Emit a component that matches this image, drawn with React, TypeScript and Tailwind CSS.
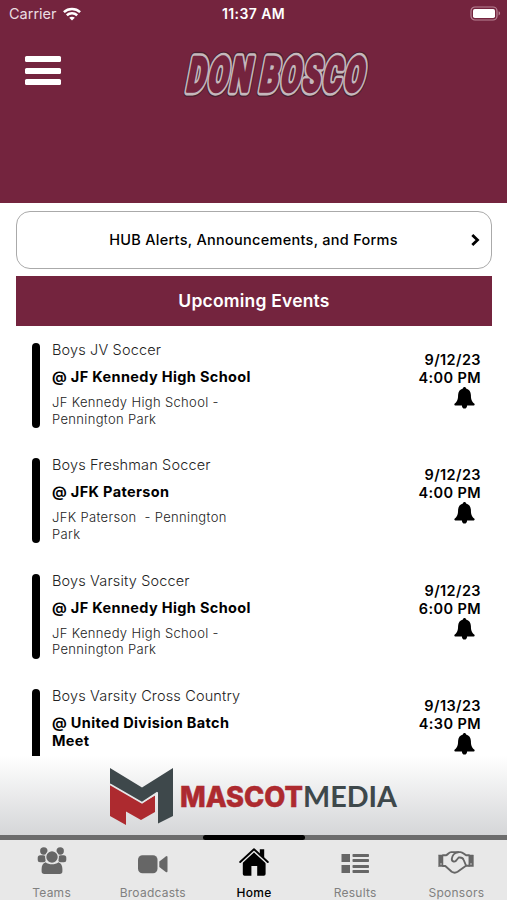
import React from "react";

type Event = {
  team: string;
  opponent: string[];
  venue: string[];
  date: string;
  time: string;
};

const events: Event[] = [
  {
    team: "Boys JV Soccer",
    opponent: ["@ JF Kennedy High School"],
    venue: ["JF Kennedy High School -", "Pennington Park"],
    date: "9/12/23",
    time: "4:00 PM",
  },
  {
    team: "Boys Freshman Soccer",
    opponent: ["@ JFK Paterson"],
    venue: ["JFK Paterson  - Pennington", "Park"],
    date: "9/12/23",
    time: "4:00 PM",
  },
  {
    team: "Boys Varsity Soccer",
    opponent: ["@ JF Kennedy High School"],
    venue: ["JF Kennedy High School -", "Pennington Park"],
    date: "9/12/23",
    time: "6:00 PM",
  },
  {
    team: "Boys Varsity Cross Country",
    opponent: ["@ United Division Batch", "Meet"],
    venue: [],
    date: "9/13/23",
    time: "4:30 PM",
  },
];

function WifiIcon() {
  return (
    <svg className="ml-[6px] h-[14px] w-[18px]" viewBox="0 0 18 14" fill="none" stroke="#fff" strokeWidth="2.5">
      <path d="M0.9 5.1C5.4 0.9 12.6 0.9 17.1 5.1" />
      <path d="M3.8 8.2C6.8 5.5 11.2 5.5 14.2 8.2" />
      <path d="M9 13.6L6.2 10.7C7.8 9.3 10.2 9.3 11.8 10.7Z" fill="#fff" stroke="none" />
    </svg>
  );
}

function BatteryIcon() {
  return (
    <svg className="h-[15px] w-[32px]" viewBox="0 0 32 15">
      <rect x="1" y="1" width="26" height="13" rx="4" fill="none" stroke="#b98496" strokeWidth="1.2" />
      <rect x="3" y="3" width="22" height="9" rx="1.8" fill="#fff" />
      <path d="M28.6 5.3C30.6 6 30.6 8.6 28.6 9.4Z" fill="#b98496" />
    </svg>
  );
}

const logoLayers = [
  { color: "#47202f", width: 11.5 },
  { color: "#c5b8bc", width: 8.8 },
  { color: "#74243e", width: 3.6 },
];

function TeamLogo() {
  const text = {
    y: 0,
    lengthAdjust: "spacingAndGlyphs" as const,
    fontFamily: "Roboto, sans-serif",
    fontWeight: 800,
    fontSize: 47,
    letterSpacing: 4.5,
    strokeLinejoin: "round" as const,
  };
  return (
    <svg className="h-[70px] w-[230px] overflow-visible" viewBox="0 0 230 70">
      <g transform="translate(9.5 45.5) skewX(-11)">
        {logoLayers.map((layer) => (
          <g key={layer.color} fill={layer.color} stroke={layer.color} strokeWidth={layer.width}>
            <text {...text} x={0} textLength={66}>DON</text>
            <text {...text} x={73} textLength={106}>BOSCO</text>
          </g>
        ))}
      </g>
    </svg>
  );
}

function BellIcon() {
  return (
    <svg className="mr-[6px] h-[22px] w-[21px]" viewBox="0 0 21 22" fill="#000">
      <path d="M10.5 0C11.4 0 12 .6 12.1 1.5C15.2 2.3 16.8 4.8 16.9 8C17 12 17.4 14 20.2 16.6C21 17.4 20.7 18.4 19.8 18.4H13.1C13.1 20.3 12 21.6 10.5 21.6S7.9 20.3 7.9 18.4H1.2C.3 18.4 0 17.4.8 16.6C3.6 14 4 12 4.1 8C4.2 4.8 5.8 2.3 8.9 1.5C9 .6 9.6 0 10.5 0Z" />
    </svg>
  );
}

function EventRow({ event }: { event: Event }) {
  return (
    <div className="flex h-[115.3px] shrink-0 pl-8 pr-[26px]">
      <div className="h-[85px] w-2 shrink-0 rounded-full bg-black" />
      <div className="ml-3 flex-1 whitespace-pre">
        <div className="h-[15px] text-[14.5px] font-light leading-[14px] tracking-[0.15px] text-[#222]">{event.team}</div>
        <div className="mt-[10px] text-[14.5px] font-bold leading-[18px] tracking-[0.35px]">
          {event.opponent.map((line) => (
            <div key={line}>{line}</div>
          ))}
        </div>
        <div className="mt-[8px] text-[13px] font-light leading-[16.5px] tracking-[0.34px] text-[#222]">
          {event.venue.map((line) => (
            <div key={line}>{line}</div>
          ))}
        </div>
      </div>
      <div className="flex flex-col items-end pt-[8px] text-[14.5px] font-semibold leading-[18px] tracking-[0.4px]">
        <div>{event.date}</div>
        <div>{event.time}</div>
        <BellIcon />
      </div>
    </div>
  );
}

function MascotMediaLogo() {
  return (
    <svg className="h-[84px] w-full" viewBox="0 0 507 84">
      <path d="M110 12L142 31.5L173 12V60L158 67.5V36L142 46.5L110 29Z" fill="#3e484b" />
      <path d="M110 28.5L142 47L155 39.5V56L141 64L126 55.5V69L110 60Z" fill="#ad2a2f" />
      <path d="M110 28.2L142 46.7L157.5 36.5" fill="none" stroke="#e7e8e9" strokeWidth="1.7" />
      <text x="180" y="50.5" textLength="123" lengthAdjust="spacingAndGlyphs" fontFamily="Inter, sans-serif" fontWeight="800" fontSize="28" fill="#ad2a2f" stroke="#ad2a2f" strokeWidth=".5">MASCOT</text>
      <text x="303" y="50.5" textLength="94" lengthAdjust="spacingAndGlyphs" fontFamily="Lato, sans-serif" fontWeight="700" fontSize="28" fill="#3e484b">MEDIA</text>
    </svg>
  );
}

function TeamsIcon() {
  return (
    <svg className="h-[28px] w-[30px]" viewBox="0 0 30 28" fill="#666">
      <circle cx="6.8" cy="4" r="3.7" />
      <circle cx="23.2" cy="4" r="3.7" />
      <rect x="0.7" y="8.2" width="8" height="7" rx="2.5" />
      <rect x="21.3" y="8.2" width="8" height="7" rx="2.5" />
      <circle cx="15" cy="10" r="6.3" stroke="#e8e8e8" strokeWidth="1.2" />
      <path d="M8.6 15.2C12 17.9 18 17.9 21.4 15.2C24.2 16.2 25.4 18.6 25.4 22V24.3Q25.4 27 22.7 27H7.3Q4.6 27 4.6 24.3V22C4.6 18.6 5.8 16.2 8.6 15.2Z" />
    </svg>
  );
}

function VideoIcon() {
  return (
    <svg className="h-[28px] w-[30px]" viewBox="0 0 30 28" fill="#666">
      <rect x="0" y="8.2" width="19.5" height="18" rx="4.5" />
      <path d="M21.3 14.4L27.8 9.4Q29.5 8.5 29.5 10.5V23.9Q29.5 25.9 27.8 25L21.3 20Z" />
    </svg>
  );
}

function HomeIcon() {
  return (
    <svg className="h-[30px] w-[30px] -mb-[2px]" viewBox="0 0 30 30" fill="#000">
      <path d="M15 4.5L26.6 15.5V27Q26.6 28.8 24.8 28.8H18.2V19H12.4V28.8H5.6Q3.8 28.8 3.8 27V15.5Z" />
      <path d="M1.2 15.6L15 3L28.8 15.6" fill="none" stroke="#e8e8e8" strokeWidth="3.6" />
      <path d="M20.8 2.2H25.2V11.2L20.8 7.2Z" />
      <path d="M1.2 15L15 2.3L28.8 15" fill="none" stroke="#000" strokeWidth="1.9" strokeLinecap="round" strokeLinejoin="round" />
    </svg>
  );
}

function ResultsIcon() {
  return (
    <svg className="h-[28px] w-[30px]" viewBox="0 0 30 28" fill="#666">
      <rect x="1.5" y="7" width="8.5" height="8" />
      <rect x="1.5" y="18" width="8.5" height="8" />
      <rect x="12.5" y="7" width="16.5" height="3" rx=".8" />
      <rect x="12.5" y="12" width="16.5" height="3" rx=".8" />
      <rect x="12.5" y="18" width="16.5" height="3" rx=".8" />
      <rect x="12.5" y="23" width="16.5" height="3" rx=".8" />
    </svg>
  );
}

function SponsorsIcon() {
  return (
    <svg className="h-[28px] w-[36px]" viewBox="0 0 36 28" fill="none" stroke="#666" strokeWidth="1.9" strokeLinejoin="round" strokeLinecap="round">
      <path d="M.6 8H5V19.5H.6ZM31 8H35.4V19.5H31Z" fill="#666" strokeWidth="0.5" />
      <path d="M5 8.3H8C10 7.7 10.8 5.1 13.2 5.1H22.5C25 5.1 26.2 7.7 28.2 8.3H31" />
      <path d="M5 19H7.3L13.7 24.8Q16.7 26.7 19.6 24.8L28 18.8H31" />
      <path d="M20.2 5.2C16.2 5.4 14.2 9 13.8 11.8C13.6 15 17.3 15.5 18.6 13L20.7 10.5C23.8 10.1 25.1 11.2 25.7 13L28 18.5" />
      <circle cx="3" cy="17" r=".7" fill="#e8e8e8" stroke="none" />
      <circle cx="33" cy="17" r=".7" fill="#e8e8e8" stroke="none" />
    </svg>
  );
}

const tabs = [
  { label: "Teams", icon: <TeamsIcon />, active: false },
  { label: "Broadcasts", icon: <VideoIcon />, active: false },
  { label: "Home", icon: <HomeIcon />, active: true },
  { label: "Results", icon: <ResultsIcon />, active: false },
  { label: "Sponsors", icon: <SponsorsIcon />, active: false },
];

export default function App() {
  return (
    <div className="flex h-[900px] w-[507px] flex-col overflow-hidden bg-white font-['Inter',sans-serif] text-black">
      <header className="h-[203px] shrink-0 bg-[#74243e] text-white">
        <div className="grid h-[27px] grid-cols-3 items-center text-[14.5px]">
          <div className="flex items-center pl-[9px]">
            <span className="text-[#eadde1]">Carrier</span>
            <WifiIcon />
          </div>
          <div className="text-center text-[14px] font-semibold tracking-[0.4px]">11:37 AM</div>
          <div className="flex justify-end pr-[5px]">
            <BatteryIcon />
          </div>
        </div>
        <div className="flex pt-[18px]">
          <div className="ml-[25px] mt-[11px] flex w-[35.5px] flex-col gap-[5.5px]">
            <div className="h-[6px] rounded-[1.5px] bg-white" />
            <div className="h-[6px] rounded-[1.5px] bg-white" />
            <div className="h-[6px] rounded-[1.5px] bg-white" />
          </div>
          <div className="ml-[115px]">
            <TeamLogo />
          </div>
        </div>
      </header>

      <div className="ml-4 mr-[15px] mt-2 flex h-[58px] shrink-0 items-center rounded-[14px] border-[1.5px] border-[#aaa] pl-[19px] pr-[11px]">
        <span className="flex-1 text-center text-[14.5px] font-medium tracking-[0.28px]">HUB Alerts, Announcements, and Forms</span>
        <svg className="h-[12px] w-[9px]" viewBox="0 0 9 12" fill="none" stroke="#000" strokeWidth="2.8">
          <path d="M1.3 1L6.5 6L1.3 11" />
        </svg>
      </div>

      <div className="ml-4 mr-[15px] mt-[7px] flex h-[50px] shrink-0 items-center justify-center bg-[#74243e] text-[17.5px] font-semibold tracking-[0.2px] text-white">
        Upcoming Events
      </div>

      <main className="flex h-[430px] shrink-0 flex-col overflow-hidden pt-[17px]">
        {events.map((event) => (
          <EventRow key={event.team} event={event} />
        ))}
      </main>

      <div className="h-[79px] shrink-0 overflow-hidden bg-gradient-to-b from-white to-[#d5d6d8]">
        <MascotMediaLogo />
      </div>

      <div className="flex h-[5px] shrink-0 justify-center bg-[#6c6c6c]">
        <div className="w-[102px] rounded-full bg-black" />
      </div>

      <nav className="grid flex-1 grid-cols-5 bg-[#e8e8e8] pl-px">
        {tabs.map((tab) => (
          <div key={tab.label} className="flex flex-col items-center pt-[7px]">
            {tab.icon}
            <div className={tab.active ? "mt-[9.5px] text-[12px] font-medium leading-[16px] tracking-[0.3px] text-black" : "mt-[9.5px] text-[12px] leading-[16px] tracking-[0.25px] text-[#808080]"}>
              {tab.label}
            </div>
          </div>
        ))}
      </nav>
    </div>
  );
}
